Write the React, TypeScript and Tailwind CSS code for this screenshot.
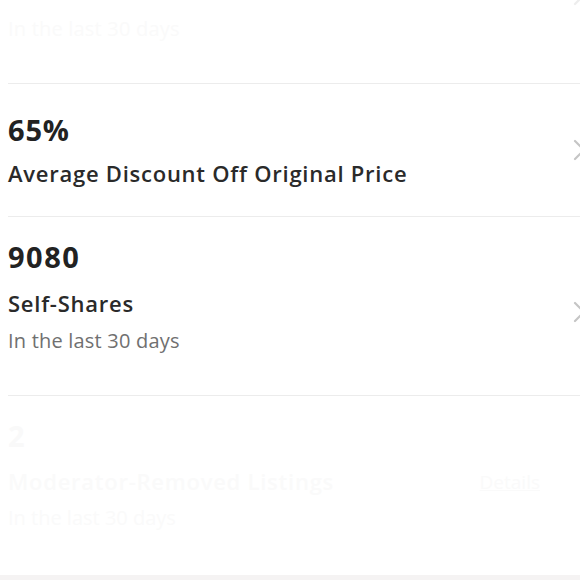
import React from "react";

function Chevron({ className = "" }: { className?: string }) {
  return (
    <svg
      width="14"
      height="22"
      viewBox="0 0 14 22"
      fill="none"
      className={className}
    >
      <path d="M3 2 L12 11 L3 20" stroke="#c5c5c5" strokeWidth="2.2" strokeLinecap="round" strokeLinejoin="round" />
    </svg>
  );
}

export default function App() {
  return (
    <div
      className="w-[580px] h-[580px] overflow-hidden bg-white flex flex-col"
      style={{ fontFamily: "'Open Sans', Lato, sans-serif" }}
    >
      {/* Top faded section */}
      <div className="relative ml-2 h-[84px] border-b border-[#ececec]">
        <div className="pt-[16px] text-[20px] leading-[26px] tracking-[0.2px] text-[#fafafa]">In the last 30 days</div>
        <div className="absolute right-[-6px] top-[-16px]">
          <Chevron className="opacity-30" />
        </div>
      </div>

      {/* 65% */}
      <div className="ml-2 flex items-center border-b border-[#ececec] h-[133px]">
        <div className="flex-1">
          <div className="text-[29px] leading-[36px] font-bold tracking-[0.8px] text-[#222]">65%</div>
          <div className="mt-[12px] text-[22px] leading-[27px] font-semibold tracking-[0.75px] text-[#2a2a2a]">
            Average Discount Off Original Price
          </div>
        </div>
        <Chevron className="mr-[-6px]" />
      </div>

      {/* 9080 */}
      <div className="ml-2 flex items-center border-b border-[#ececec] h-[180px]">
        <div className="flex-1 pt-[22px] self-start">
          <div className="text-[29px] leading-[36px] font-bold tracking-[1.5px] text-[#222]">9080</div>
          <div className="mt-[15px] text-[22px] leading-[27px] font-semibold tracking-[0.75px] text-[#2a2a2a]">Self-Shares</div>
          <div className="mt-[11px] text-[20px] leading-[26px] tracking-[0.2px] text-[#707070]">In the last 30 days</div>
        </div>
        <Chevron className="mr-[-6px] mt-[12px]" />
      </div>

      {/* Faded section */}
      <div className="ml-2 flex items-start h-[179px]">
        <div className="flex-1 pt-[22px]">
          <div className="text-[29px] leading-[36px] font-bold text-[#f9f9f9]">2</div>
          <div className="mt-[14px] flex items-center">
            <div className="flex-1 text-[22px] leading-[27px] font-semibold tracking-[0.75px] text-[#fafafa]">
              Moderator-Removed Listings
            </div>
            <div className="text-[19px] leading-[26px] text-[#fafafa] underline mr-[40px]">Details</div>
          </div>
          <div className="mt-[10px] text-[20px] leading-[26px] text-[#fafafa]">In the last 30 days</div>
        </div>
      </div>

      <div className="h-[5px] bg-[#f5f3f3]" />
    </div>
  );
}
